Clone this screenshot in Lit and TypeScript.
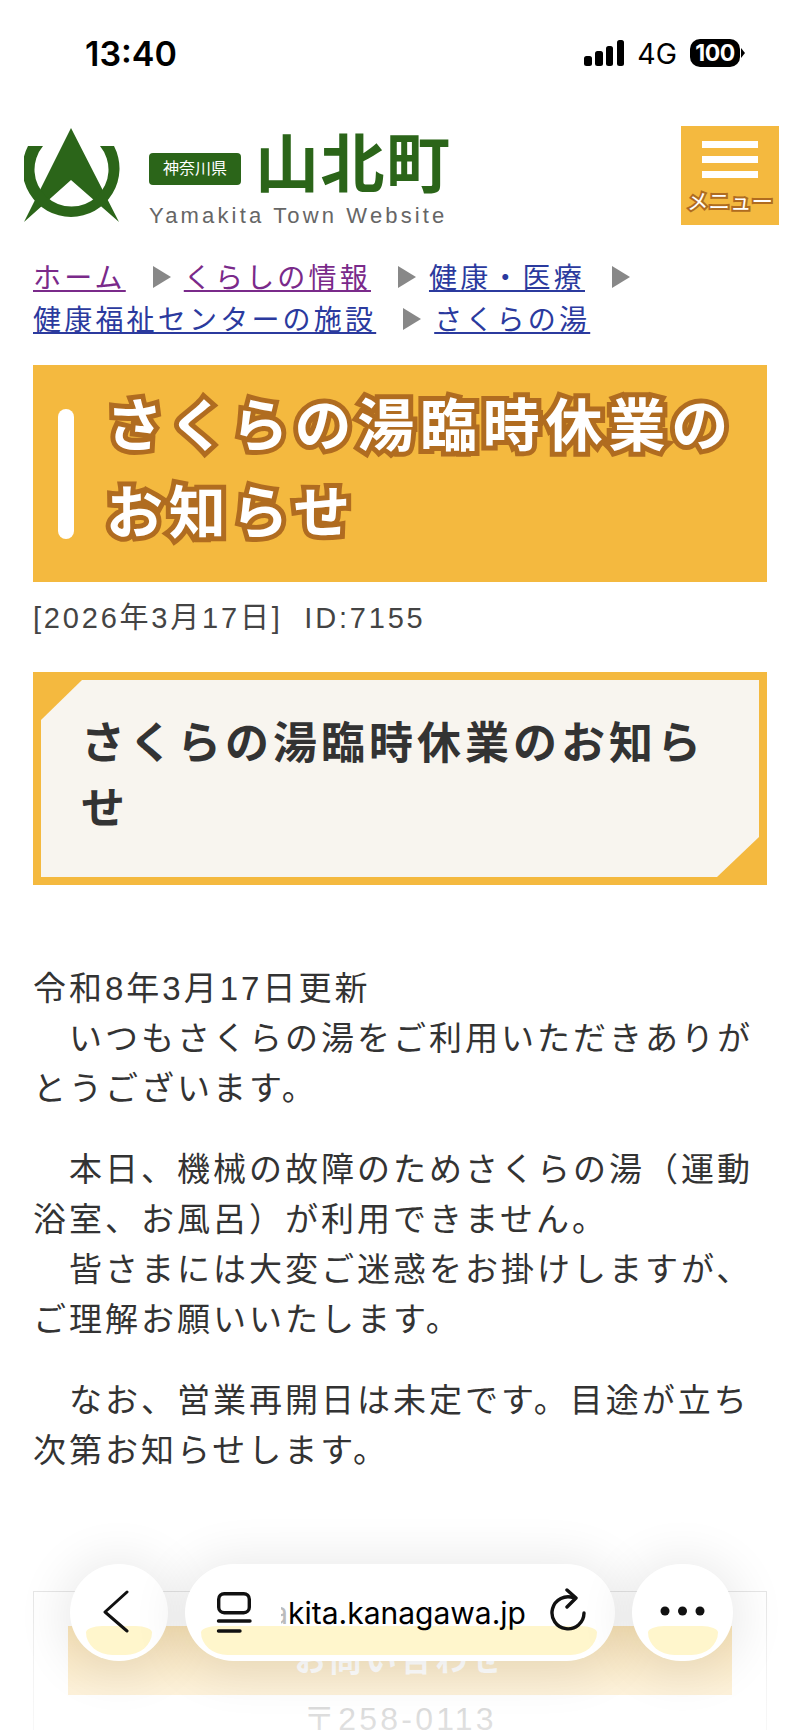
import { LitElement, css, html } from 'lit';
import { customElement } from 'lit/decorators.js';

const crumbs = [
  { label: 'ホーム', visited: true },
  { label: 'くらしの情報', visited: true },
  { label: '健康・医療', visited: false },
  { label: '健康福祉センターの施設', visited: false },
  { label: 'さくらの湯', visited: false },
];

@customElement('app-root')
export class AppRoot extends LitElement {
  static styles = css`
    :host {
      display: block;
      position: relative;
      width: 800px;
      height: 1730px;
      overflow: hidden;
      background: #fff;
      color: #333;
      font-family: "Liberation Sans", "Noto Sans CJK JP", sans-serif;
    }
    a { color: inherit; }

    .status {
      display: flex;
      justify-content: space-between;
      align-items: center;
      height: 106px;
      padding: 0 60px 0 85px;
      color: #000;
      font-family: Inter, sans-serif;
    }
    .time { font-size: 34px; font-weight: 600; }
    .status-right { display: flex; align-items: center; gap: 13px; font-size: 28.5px; }
    .battery {
      position: relative;
      width: 50px;
      height: 28px;
      border-radius: 10px;
      background: #000;
      color: #fff;
      font-size: 23px;
      font-weight: 700;
      line-height: 28px;
      text-align: center;
      letter-spacing: -0.5px;
    }
    .battery::after {
      content: '';
      position: absolute;
      right: -5px;
      top: 9px;
      border-left: 4px solid #000;
      border-top: 5px solid transparent;
      border-bottom: 5px solid transparent;
    }

    .header {
      display: flex;
      align-items: center;
      height: 100px;
      margin-top: 19px;
      padding: 0 21px 0 24px;
    }
    .logo { flex: none; width: 96px; height: 98px; }
    .brand { margin-left: 29px; padding-top: 6px; }
    .brand-top { display: flex; align-items: center; gap: 14px; height: 76px; }
    .pref {
      width: 92px;
      height: 32px;
      margin-top: 8px;
      border-radius: 4px;
      background: #2b6519;
      color: #fff;
      font-size: 16px;
      line-height: 32px;
      text-align: center;
    }
    .town {
      color: #2b6519;
      font-size: 64px;
      font-weight: 700;
      line-height: 76px;
      letter-spacing: 1.5px;
    }
    .brand-en {
      color: #666;
      font-size: 22px;
      line-height: 26px;
      letter-spacing: 3.15px;
    }
    .menu {
      flex: none;
      display: flex;
      flex-direction: column;
      align-items: center;
      width: 98px;
      height: 99px;
      margin-left: auto;
      padding-top: 15px;
      box-sizing: border-box;
      background: #f4b93f;
    }
    .menu i { display: block; width: 56px; height: 7px; margin-bottom: 8px; background: #fff; }
    .menu span {
      margin-top: 1px;
      color: #fff;
      font-size: 21.5px;
      line-height: 30px;
      -webkit-text-stroke: 4px #b06c20;
      paint-order: stroke fill;
    }

    .crumbs {
      margin: 33px 33px 0;
      padding: 0;
      list-style: none;
      font-size: 28px;
      line-height: 42px;
      letter-spacing: 3.2px;
    }
    .crumbs li { display: inline-block; }
    .crumbs a { color: #2b3a9e; }
    .crumbs a.visited { color: #7a2a8a; }
    .arrow {
      display: inline-block;
      width: 0;
      height: 0;
      margin: 0 13px 0 27px;
      border-left: 18px solid #888;
      border-top: 11px solid transparent;
      border-bottom: 11px solid transparent;
      vertical-align: 0;
    }

    .title {
      display: flex;
      align-items: center;
      gap: 32px;
      margin: 23px 33px 0;
      padding-left: 25px;
      background: #f4b93f;
    }
    .title::before {
      content: '';
      flex: none;
      width: 16px;
      height: 130px;
      border-radius: 8px;
      background: #fff;
    }
    h1 {
      margin: 0;
      padding: 18px 30px 25px 0;
      color: #fff;
      font-size: 57px;
      font-weight: 700;
      line-height: 87px;
      letter-spacing: 5.8px;
      -webkit-text-stroke: 10px #b06c20;
      paint-order: stroke fill;
    }

    .meta {
      margin: 15px 33px 0;
      color: #444;
      font-size: 29px;
      line-height: 42px;
      letter-spacing: 2.8px;
    }

    .sub {
      margin: 33px 33px 0;
      padding: 8px;
      background: #f4b93f;
    }
    h2 {
      margin: 0;
      padding: 31px 43px 36px 40px;
      background: #f8f5ef;
      color: #333;
      font-size: 44px;
      font-weight: 700;
      line-height: 65px;
      letter-spacing: 4px;
      clip-path: polygon(41px 0, 100% 0, 100% calc(100% - 40px), calc(100% - 42px) 100%, 0 100%, 0 40px);
    }

    .body { margin: 79px 33px 0; font-size: 33px; line-height: 50px; letter-spacing: 3px; }
    .body p { margin: 0 0 31px; }

    .contact {
      margin: 115px 33px 0;
      padding: 34px 34px 0;
      border: 1px solid #ccc;
      text-align: center;
    }
    .contact h3 {
      margin: 0;
      background: #f4b93f;
      color: #fff;
      font-size: 32px;
      font-weight: 700;
      line-height: 69px;
      letter-spacing: 3.2px;
    }
    .contact p { margin: 0; color: #333; font-size: 32px; line-height: 48px; letter-spacing: 3.2px; }

    .fade {
      position: absolute;
      left: 0;
      right: 0;
      bottom: 0;
      height: 240px;
      background: linear-gradient(
        rgba(255, 255, 255, 0),
        rgba(255, 255, 255, 0.5) 42%,
        rgba(255, 255, 255, 0.68) 62.5%,
        rgba(255, 255, 255, 0.8) 83%,
        rgba(255, 255, 255, 0.85)
      );
    }
    .pill {
      position: absolute;
      top: 1564px;
      height: 97px;
      border-radius: 49px;
      background: #fff;
      box-shadow: 0 4px 50px 8px rgba(0, 0, 0, 0.09);
      overflow: hidden;
    }
    .pill svg { position: absolute; }
    .glow {
      position: absolute;
      top: 62px;
      height: 29px;
      border-radius: 20px 20px 33px 33px / 8px 8px 28px 28px;
      background: #fff6cc;
    }
    .back { left: 70px; width: 98px; }
    .back .glow { left: 16px; width: 66px; }
    .back svg { left: 33px; top: 26px; }
    .url { left: 185px; width: 430px; }
    .url .glow { left: 16px; width: 396px; }
    .url .reader { left: 30px; top: 26px; }
    .url .reload { left: 365px; top: 24px; }
    .address {
      position: absolute;
      left: 96px;
      top: 27px;
      color: #000;
      font-family: Inter, sans-serif;
      font-size: 30px;
      line-height: 44px;
      white-space: nowrap;
    }
    .cut {
      display: inline-block;
      width: 7px;
      overflow: hidden;
      direction: rtl;
      color: #bbb;
      vertical-align: bottom;
    }
    .more { left: 632px; width: 101px; }
    .more .glow { left: 16px; width: 70px; }
    .more svg { left: 28px; top: 42px; }
  `;

  render() {
    return html`
      <div class="status">
        <span class="time">13:40</span>
        <div class="status-right">
          <svg width="40" height="26" viewBox="0 0 40 26" fill="#000">
            <rect x="0" y="16" width="8" height="10" rx="2.5"></rect>
            <rect x="11" y="11" width="8" height="15" rx="2.5"></rect>
            <rect x="22" y="6" width="7" height="20" rx="2.5"></rect>
            <rect x="33" y="0" width="7" height="26" rx="2.5"></rect>
          </svg>
          <span>4G</span>
          <div class="battery">100</div>
        </div>
      </div>

      <header class="header">
        <svg class="logo" viewBox="24 128 96 98" fill="#2b6519">
          <path d="M71 130 L119 224 L71 182 L24 224 Z"></path>
          <path d="M28 148 H43 A37 37 0 1 0 100 148 H114 A48.5 48.5 0 1 1 28 148 Z"></path>
        </svg>
        <div class="brand">
          <div class="brand-top">
            <div class="pref">神奈川県</div>
            <div class="town">山北町</div>
          </div>
          <div class="brand-en">Yamakita Town Website</div>
        </div>
        <div class="menu"><i></i><i></i><i></i><span>メニュー</span></div>
      </header>

      <ul class="crumbs">
        ${crumbs.map(
          (c, i) => html`<li><a class=${c.visited ? 'visited' : ''} href="#">${c.label}</a>${i < crumbs.length - 1
              ? html`<span class="arrow"></span>`
              : ''}</li>`,
        )}
      </ul>

      <div class="title"><h1>さくらの湯臨時休業のお知らせ</h1></div>
      <div class="meta">[2026年3月17日] &nbsp;ID:7155</div>
      <div class="sub"><h2>さくらの湯臨時休業のお知らせ</h2></div>

      <div class="body">
        <p>令和8年3月17日更新<br />　いつもさくらの湯をご利用いただきありがとうございます。</p>
        <p>　本日、機械の故障のためさくらの湯（運動浴室、お風呂）が利用できません。<br />　皆さまには大変ご迷惑をお掛けしますが、ご理解お願いいたします。</p>
        <p>　なお、営業再開日は未定です。目途が立ち次第お知らせします。</p>
      </div>

      <section class="contact">
        <h3>お問い合わせ</h3>
        <p>〒258-0113</p>
      </section>

      <div class="fade"></div>

      <div class="pill back">
        <div class="glow"></div>
        <svg width="26" height="44" viewBox="0 0 26 44" fill="none" stroke="#111" stroke-width="3" stroke-linecap="round" stroke-linejoin="round">
          <path d="M24 2 L2 22 L24 41"></path>
        </svg>
      </div>
      <div class="pill url">
        <div class="glow"></div>
        <svg class="reader" width="38" height="44" viewBox="0 0 38 44" fill="none" stroke="#111" stroke-width="3.4" stroke-linecap="round">
          <rect x="3.7" y="3.7" width="30.6" height="19" rx="5.5"></rect>
          <path d="M3.5 31 H35 M3.5 41 H25"></path>
        </svg>
        <span class="address"><span class="cut">a</span>kita.kanagawa.jp</span>
        <svg class="reload" width="38" height="44" viewBox="0 0 38 44" fill="none" stroke="#111" stroke-width="3.4" stroke-linecap="round" stroke-linejoin="round">
          <path d="M24 10 A16 16 0 1 0 34 25"></path>
          <path d="M17 2 L26 10 L17 19"></path>
        </svg>
      </div>
      <div class="pill more">
        <div class="glow"></div>
        <svg width="45" height="10" viewBox="0 0 45 10" fill="#111">
          <circle cx="5" cy="5" r="4.5"></circle>
          <circle cx="22.5" cy="5" r="4.5"></circle>
          <circle cx="40" cy="5" r="4.5"></circle>
        </svg>
      </div>
    `;
  }
}
